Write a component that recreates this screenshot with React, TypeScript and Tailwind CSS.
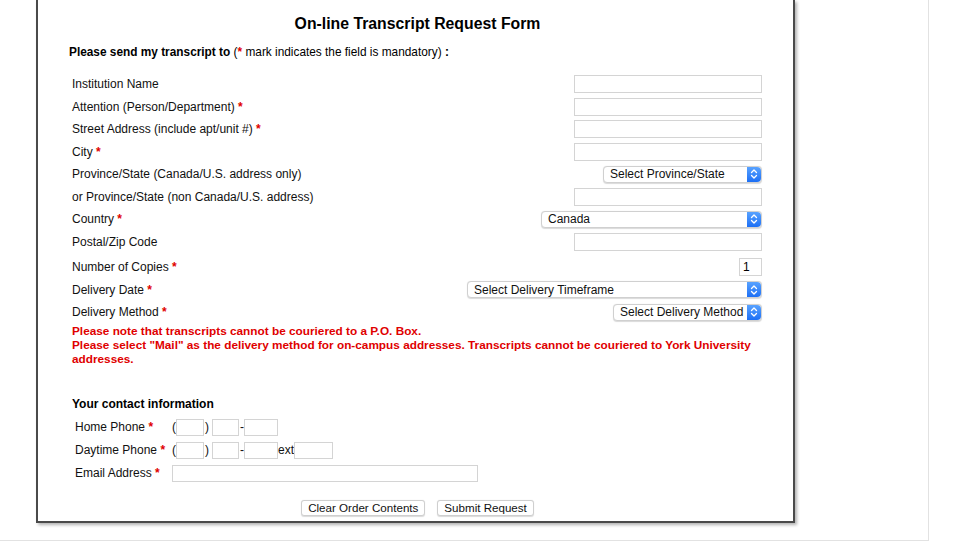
import React from "react";

const Star = () => <span className="text-[#e00000] font-bold"> *</span>;

const TextInput = ({ w = "w-[188px]" }: { w?: string }) => (
  <input
    type="text"
    className={`${w} h-[18px] border border-[#d4d4d4] bg-white outline-none text-[12px] px-[3px]`}
  />
);

const Stepper = () => (
  <div className="w-[14px] h-full rounded-r-[4px] bg-gradient-to-b from-[#58a2ff] to-[#1c6ff5] flex items-center justify-center">
    <svg width="8" height="12" viewBox="0 0 8 12" fill="none" stroke="white" strokeWidth="1.3" strokeLinecap="round" strokeLinejoin="round">
      <path d="M1.5 4.5 L4 2 L6.5 4.5" />
      <path d="M1.5 7.5 L4 10 L6.5 7.5" />
    </svg>
  </div>
);

const FakeSelect = ({ label, w }: { label: string; w: string }) => (
  <div className={`${w} h-[17px] flex items-stretch rounded-[4px] border border-[#d0d0d0] bg-white shadow-[0_0.5px_1px_rgba(0,0,0,0.15)]`}>
    <div className="flex-1 pl-[6px] flex items-center text-[12px] text-[#111] leading-none">{label}</div>
    <Stepper />
  </div>
);

const Row = ({ label, star, children }: { label: string; star?: boolean; children: React.ReactNode }) => (
  <div className="h-[22.5px] flex items-center justify-between">
    <span className="text-[12px] text-[#111]">
      {label}
      {star && <Star />}
    </span>
    {children}
  </div>
);

const PhoneBox = ({ w }: { w: string }) => (
  <input type="text" className={`${w} h-[17px] border border-[#d4d4d4] bg-white outline-none`} />
);

export default function App() {
  return (
    <div
      className="w-[975px] h-[542px] bg-white overflow-hidden relative"
      style={{ fontFamily: '"Liberation Sans", Arial, Helvetica, sans-serif' }}
    >
      <div className="w-[929px] h-[541px] border-r border-b border-[#e2e2e2] pl-[36px]">
        <div className="w-[759px] h-[523px] border-l-2 border-r-2 border-b-2 border-[#4a4a4a] shadow-[2px_2px_3px_rgba(0,0,0,0.3)] bg-white flex flex-col">
          <h1 className="mt-[14px] pl-[4px] text-center text-[15.8px] leading-[20px] font-bold text-black">
            On-line Transcript Request Form
          </h1>
          <p className="mt-[10px] ml-[31px] text-[11.85px] leading-[16px] text-black">
            <span className="font-bold">Please send my transcript to</span> (
            <span className="text-[#e00000] font-bold">*</span> mark indicates the field is mandatory)
            <span className="font-bold"> :</span>
          </p>

          <div className="mt-[13px] ml-[34px] mr-[31px] flex flex-col">
            <Row label="Institution Name">
              <TextInput />
            </Row>
            <Row label="Attention (Person/Department)" star>
              <TextInput />
            </Row>
            <Row label="Street Address (include apt/unit #)" star>
              <TextInput />
            </Row>
            <Row label="City" star>
              <TextInput />
            </Row>
            <Row label="Province/State (Canada/U.S. address only)">
              <FakeSelect label="Select Province/State" w="w-[159px]" />
            </Row>
            <Row label="or Province/State (non Canada/U.S. address)">
              <TextInput />
            </Row>
            <Row label="Country" star>
              <FakeSelect label="Canada" w="w-[221px]" />
            </Row>
            <Row label="Postal/Zip Code">
              <TextInput />
            </Row>
            <div className="h-[3px]" />
            <Row label="Number of Copies" star>
              <input
                type="text"
                defaultValue="1"
                className="w-[23px] h-[18px] border border-[#d4d4d4] bg-white outline-none text-[12px] px-[3px] text-black"
              />
            </Row>
            <Row label="Delivery Date" star>
              <FakeSelect label="Select Delivery Timeframe" w="w-[295px]" />
            </Row>
            <Row label="Delivery Method" star>
              <FakeSelect label="Select Delivery Method" w="w-[149px]" />
            </Row>
            <div className="mt-[0.5px] mr-[-8px] text-[11.8px] leading-[14px] font-bold text-[#e00000]">
              <p>Please note that transcripts cannot be couriered to a P.O. Box.</p>
              <p>
                Please select "Mail" as the delivery method for on-campus addresses. Transcripts cannot be couriered to York University addresses.
              </p>
            </div>

            <h2 className="mt-[30px] text-[12px] leading-[16px] font-bold text-black">Your contact information</h2>

            <div className="mt-[3.5px] ml-[3px] flex flex-col">
              <div className="h-[23px] flex items-center text-[12px] text-[#111]">
                <span className="w-[97px]">
                  Home Phone<Star />
                </span>
                <span>(</span>
                <PhoneBox w="w-[28px]" />
                <span className="ml-[1px]">)</span>
                <span className="ml-[3px]"><PhoneBox w="w-[27px]" /></span>
                <span className="ml-[1px]">-</span>
                <PhoneBox w="w-[34px]" />
              </div>
              <div className="h-[23px] flex items-center text-[12px] text-[#111]">
                <span className="w-[97px]">
                  Daytime Phone<Star />
                </span>
                <span>(</span>
                <PhoneBox w="w-[28px]" />
                <span className="ml-[1px]">)</span>
                <span className="ml-[3px]"><PhoneBox w="w-[27px]" /></span>
                <span className="ml-[1px]">-</span>
                <PhoneBox w="w-[34px]" />
                <span>ext</span>
                <PhoneBox w="w-[39px]" />
              </div>
              <div className="h-[23px] flex items-center text-[12px] text-[#111]">
                <span className="w-[97px]">
                  Email Address<Star />
                </span>
                <PhoneBox w="w-[306px]" />
              </div>
            </div>
          </div>

          <div className="mt-[15px] flex justify-center gap-[12px] pl-[4px]">
            <button className="h-[16px] px-[6px] border border-[#cfcfcf] rounded-[3px] bg-white text-[11.6px] leading-none text-[#111] shadow-[0_0.5px_1px_rgba(0,0,0,0.15)]">
              Clear Order Contents
            </button>
            <button className="h-[16px] px-[6px] border border-[#cfcfcf] rounded-[3px] bg-white text-[11.6px] leading-none text-[#111] shadow-[0_0.5px_1px_rgba(0,0,0,0.15)]">
              Submit Request
            </button>
          </div>
        </div>
      </div>
    </div>
  );
}
